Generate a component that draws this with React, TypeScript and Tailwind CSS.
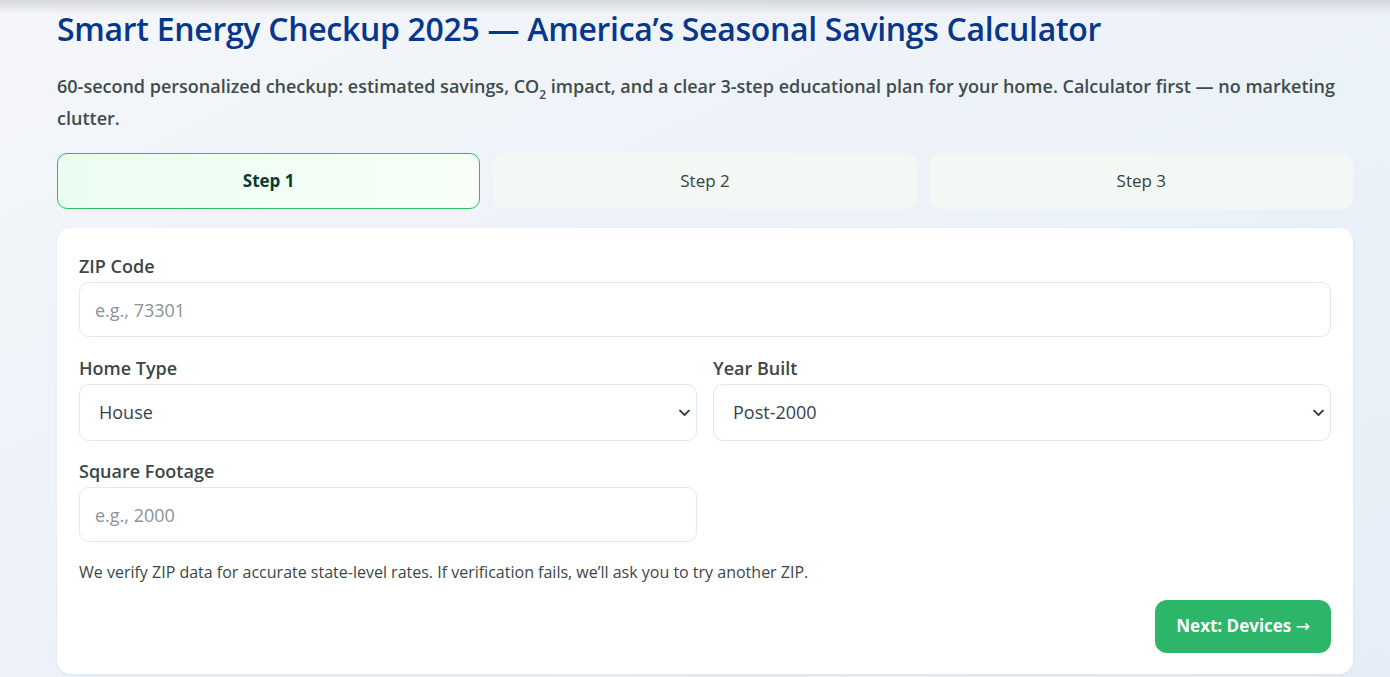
import { useState } from "react";

type Step = { id: number; label: string };

const steps: Step[] = [
  { id: 1, label: "Step 1" },
  { id: 2, label: "Step 2" },
  { id: 3, label: "Step 3" },
];

function Field({ label, children }: { label: string; children: React.ReactNode }) {
  return (
    <label className="flex flex-col">
      <span className="mb-[4px] text-[18px] font-semibold leading-[24px] text-[#3b4747]">{label}</span>
      {children}
    </label>
  );
}

function Chevron() {
  return (
    <svg
      className="pointer-events-none absolute right-[7px] top-1/2 -translate-y-1/2"
      width="11"
      height="7"
      viewBox="0 0 11 7"
      fill="none"
    >
      <path d="M1 1l4.5 4.5L10 1" stroke="#3b4444" strokeWidth="1.8" strokeLinecap="round" strokeLinejoin="round" />
    </svg>
  );
}

const inputCls =
  "h-[55px] w-full rounded-[10px] border border-[#dcebee] bg-white px-[15px] text-[18px] text-[#374151] outline-none placeholder:text-[#8a9396]";

const selectCls =
  "h-[57px] w-full appearance-none rounded-[10px] border border-[#dcebee] bg-white pl-[19px] pr-[30px] text-[18px] text-[#374151] outline-none";

export default function App() {
  const [active] = useState(1);

  return (
    <div className="relative min-h-[677px] bg-gradient-to-br from-[#f4f6fa] to-[#e5eef7] font-['Open_Sans','Liberation_Sans',sans-serif]">
      <div className="pointer-events-none absolute inset-x-0 top-0 h-[14px] bg-gradient-to-b from-[#d4d7dc] to-transparent" />
      <main className="ml-[57px] w-[1296px] pt-[8px]">
        <h1 className="text-[32px] font-semibold leading-[42px] tracking-[-0.3px] text-[#07378c]">
          Smart Energy Checkup 2025 — America’s Seasonal Savings Calculator
        </h1>
        <p className="mt-[20px] text-[18px] font-semibold leading-[32px] text-[#404c4c]">
          60-second personalized checkup: estimated savings, CO
          <sub className="align-[-3px] text-[12px] leading-none">2</sub> impact, and a clear 3-step educational plan for your
          home. Calculator first — no marketing clutter.
        </p>

        <div className="mt-[19px] grid grid-cols-3 gap-[13px]">
          {steps.map((s) =>
            s.id === active ? (
              <div
                key={s.id}
                className="flex h-[56px] items-center justify-center rounded-[10px] border border-[#2bbd62] bg-gradient-to-r from-[#eafcf0] to-[#f8fff9] text-[17px] font-bold text-[#0a3a2a]"
              >
                {s.label}
              </div>
            ) : (
              <div
                key={s.id}
                className="flex h-[56px] items-center justify-center rounded-[10px] bg-[#f3f8f4] text-[17px] font-medium text-[#354242]"
              >
                {s.label}
              </div>
            )
          )}
        </div>

        <section className="mt-[19px] rounded-[14px] bg-white px-[22px] pb-[21px] pt-[26px] shadow-[0_1px_3px_rgba(15,40,80,0.06)]">
          <Field label="ZIP Code">
            <input className={inputCls} placeholder="e.g., 73301" />
          </Field>

          <div className="mt-[19px] grid grid-cols-2 gap-[16px]">
            <Field label="Home Type">
              <div className="relative">
                <select className={selectCls} defaultValue="house">
                  <option value="house">House</option>
                  <option value="apartment">Apartment</option>
                  <option value="condo">Condo</option>
                </select>
                <Chevron />
              </div>
            </Field>
            <Field label="Year Built">
              <div className="relative">
                <select className={selectCls} defaultValue="post2000">
                  <option value="pre1980">Pre-1980</option>
                  <option value="1980-2000">1980–2000</option>
                  <option value="post2000">Post-2000</option>
                </select>
                <Chevron />
              </div>
            </Field>
          </div>

          <div className="mt-[18px] grid grid-cols-2 gap-[16px]">
            <Field label="Square Footage">
              <input className={inputCls} placeholder="e.g., 2000" />
            </Field>
          </div>

          <p className="mt-[19px] text-[16px] font-medium leading-[22px] text-[#3b4747]">
            We verify ZIP data for accurate state-level rates. If verification fails, we’ll ask you to try another ZIP.
          </p>

          <div className="mt-[17px] flex justify-end">
            <button className="h-[53px] rounded-[12px] bg-[#2db56a] px-[21px] text-[17px] font-bold text-white">
              Next: Devices <span className="font-['DejaVu_Sans'] font-normal">→</span>
            </button>
          </div>
        </section>
      </main>
    </div>
  );
}
